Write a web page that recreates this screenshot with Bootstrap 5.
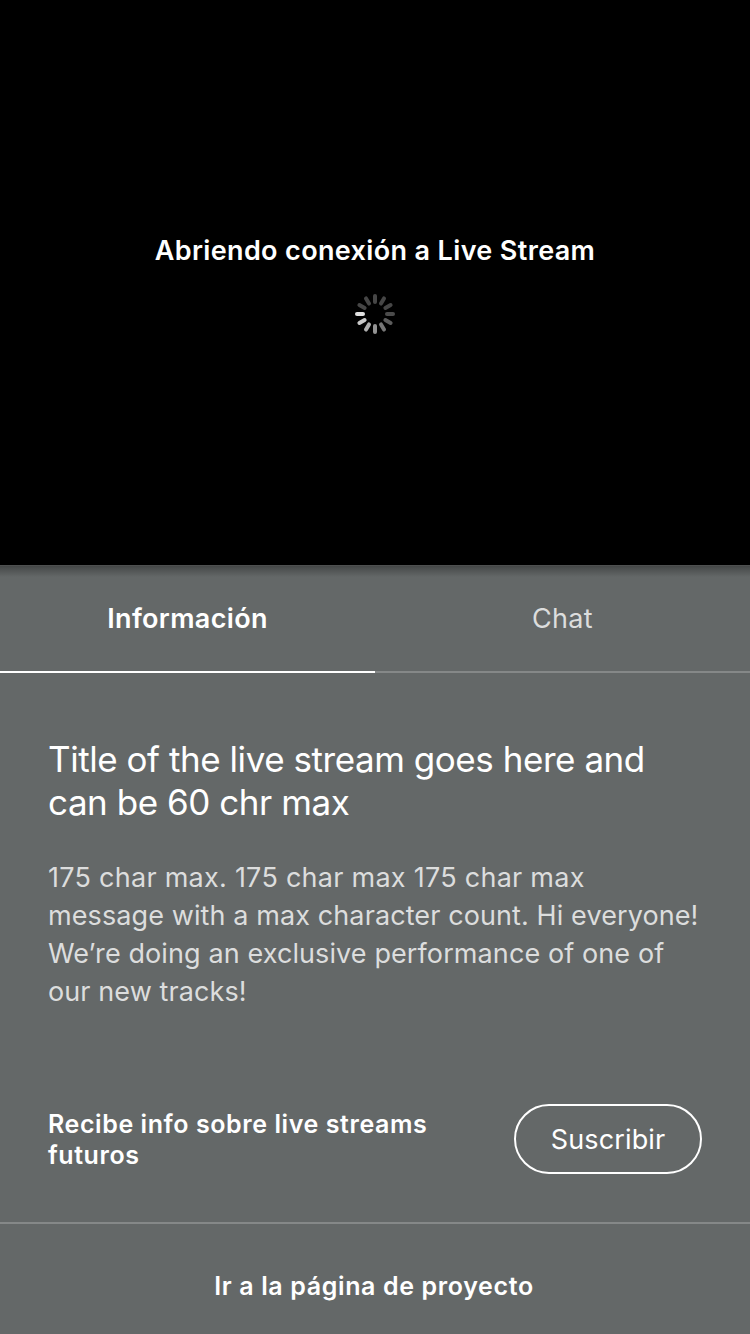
<!DOCTYPE html>
<html lang="es">
<head>
<meta charset="utf-8">
<meta name="viewport" content="width=device-width, initial-scale=1">
<title>Live Stream</title>
<link href="https://cdn.jsdelivr.net/npm/bootstrap@5.3.0/dist/css/bootstrap.min.css" rel="stylesheet">
<style>
body{font-family:Inter,"Liberation Sans",sans-serif;background:#646868;height:1334px;overflow:hidden;color:#fff}
.player{height:565px;background:#000;padding-top:230px}
.player p{font-size:27px;line-height:41px;font-weight:600;letter-spacing:.36px}
.ln{display:block;white-space:nowrap}
.loader{margin-top:23px;width:40px;height:40px}
.tabs{height:108px;background:linear-gradient(#444646,#4b4e4e 2px,#646868 11px);border-top:1px solid #4e5050}
.tab-item{width:375px;height:107px;padding-top:33px;font-size:27px;line-height:40px;letter-spacing:.34px;color:#dcdddd;border-bottom:2px solid #858888}
.tab-item.current{color:#fff;font-weight:600;border-color:#fff}
.info{padding:65px 0 0 48px;height:431px}
.info h1{font-size:35px;line-height:43px;font-weight:400;letter-spacing:-.45px;margin:0 0 35px}
.info p{font-size:27px;line-height:38px;letter-spacing:.1px;color:#dcdddd;margin:0}
.info p .numeric{letter-spacing:.26px}
.subscribe{height:120px;padding:0 48px;border-bottom:2px solid #858888}
.subscribe p{font-size:25px;line-height:31px;font-weight:600;letter-spacing:.58px;padding-top:5px}
.pill{width:188px;height:70px;border:2px solid #fff;border-radius:35px;color:#fff;font-size:27px;letter-spacing:.15px;line-height:64px;padding:2px 0 0}
.project{height:110px;padding:44px 2px 0 0;font-size:25px;line-height:36px;font-weight:600;letter-spacing:.63px;color:#fff}
</style>
</head>
<body>
<section class="player d-flex flex-column align-items-center">
<p class="mb-0">Abriendo conexión a Live Stream</p>
<svg class="loader" viewBox="-20 -20 40 40" stroke-width="4" stroke-linecap="round" role="img" aria-label="Cargando">
<path stroke="#464646" d="M0-12V-18"/>
<path stroke="#464646" d="M0-12V-18" transform="rotate(30)"/>
<path stroke="#464646" d="M0-12V-18" transform="rotate(60)"/>
<path stroke="#4b4b4b" d="M0-12V-18" transform="rotate(90)"/>
<path stroke="#5c5c5c" d="M0-12V-18" transform="rotate(120)"/>
<path stroke="#777" d="M0-12V-18" transform="rotate(150)"/>
<path stroke="#939393" d="M0-12V-18" transform="rotate(180)"/>
<path stroke="#aeaeae" d="M0-12V-18" transform="rotate(210)"/>
<path stroke="#c8c8c8" d="M0-12V-18" transform="rotate(240)"/>
<path stroke="#e0e0e0" d="M0-12V-18" transform="rotate(270)"/>
<path stroke="#464646" d="M0-12V-18" transform="rotate(300)"/>
<path stroke="#464646" d="M0-12V-18" transform="rotate(330)"/>
</svg>
</section>
<nav class="tabs d-flex text-center"><a class="tab-item current text-decoration-none">Información</a><a class="tab-item text-decoration-none">Chat</a></nav>
<main class="info"><h1><span class="ln">Title of the live stream goes here and</span><span class="ln">can be 60 chr max</span></h1>
<p><span class="ln numeric">175 char max. 175 char max 175 char max</span><span class="ln">message with a max character count. Hi everyone!</span><span class="ln">We’re doing an exclusive performance of one of</span><span class="ln">our new tracks!</span></p></main>
<section class="subscribe d-flex justify-content-between align-items-start"><p class="mb-0"><span class="ln">Recibe info sobre live streams</span><span class="ln">futuros</span></p><button class="btn pill">Suscribir</button></section>
<footer class="project text-center">Ir a la página de proyecto</footer>
<script src="https://cdn.jsdelivr.net/npm/bootstrap@5.3.0/dist/js/bootstrap.bundle.min.js"></script>
</body>
</html>
